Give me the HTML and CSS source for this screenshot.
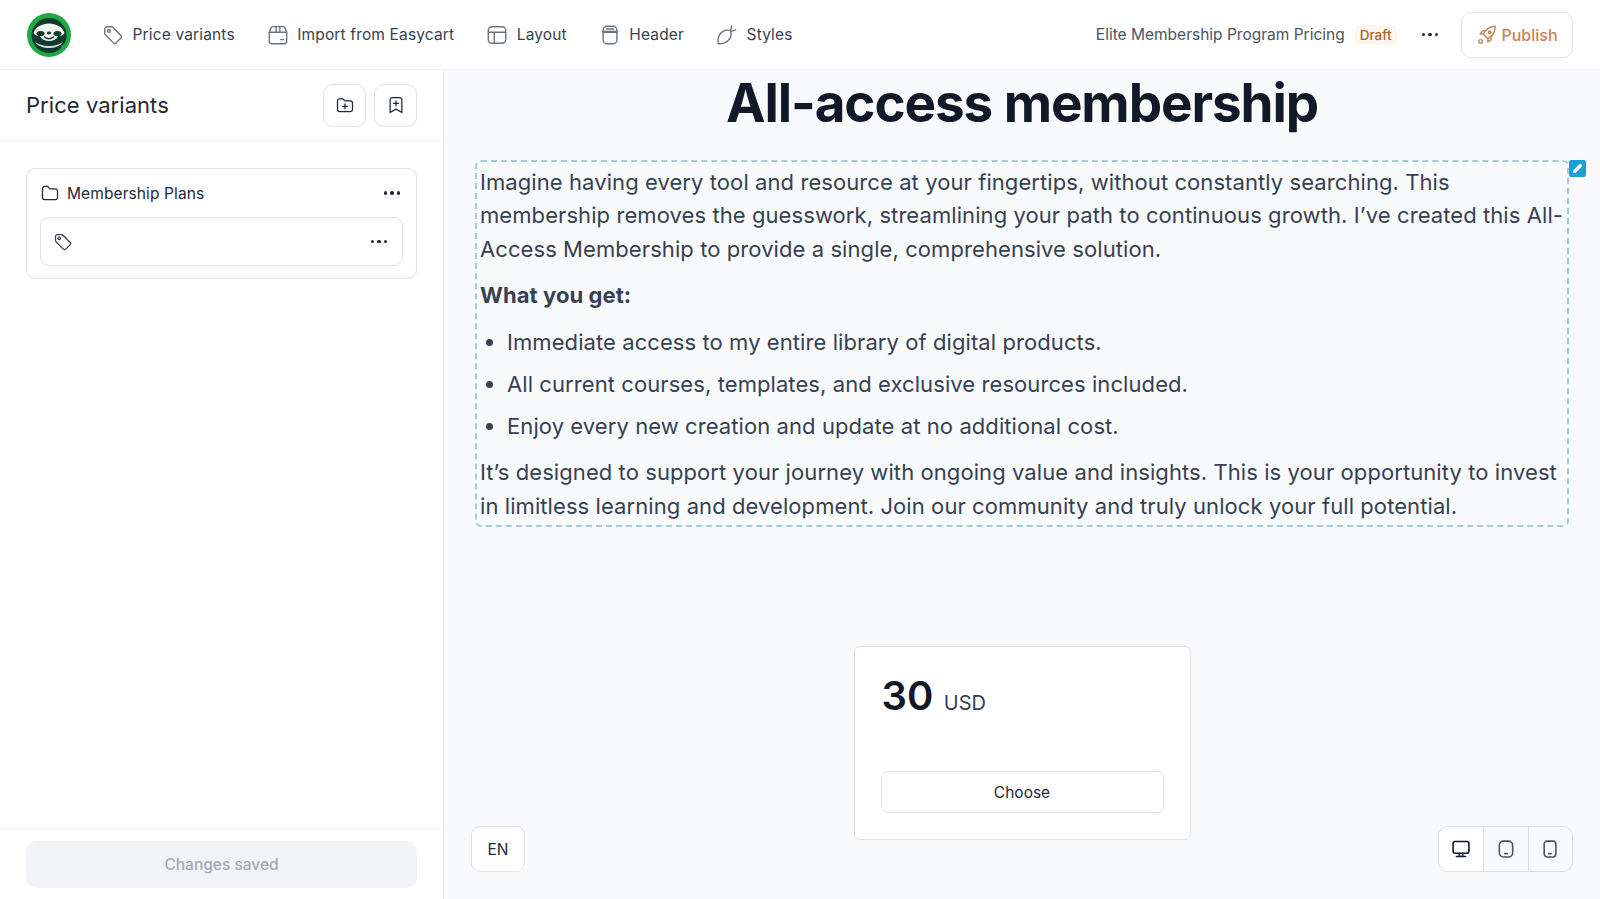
FILE: index.html
```html
<!DOCTYPE html>
<html lang="en">
<head>
    <meta charset="UTF-8">
    <meta name="viewport" content="width=device-width, initial-scale=1.0">
    <title>Elite Membership Program Pricing</title>
    <link rel="stylesheet" href="styles.css">
</head>
<body>
    <header class="topbar">
        <svg class="logo" viewBox="0 0 44 44" width="44" height="44">
            <circle cx="22" cy="22" r="22" fill="#22a745"/>
            <circle cx="22" cy="22.500" r="17.500" fill="#0e3b2e"/>
            <path d="M34 33l5-3 1 4-4 3z" fill="#22a745"/>
            <path d="M6.500 20c2-6 8.500-9.500 15.500-9.500S35.500 14 37.500 20c-1 2-3 3-5.500 3l-4-4h-12l-4 4c-2.500 0-4.500-1-5.500-3z" fill="#f4f6f2"/>
            <path d="M16 18c3-1.500 9-1.500 12 0l3 5.500c-2 3-5.500 4.500-9 4.500s-7-1.500-9-4.500z" fill="#f4f6f2"/>
            <path d="M8 29c3 4 8 6 14 6s11-2 14-6c-3 2-8 4-14 4S11 31 8 29z" fill="#f4f6f2" opacity=".85"/>
            <ellipse cx="13.500" cy="20.500" rx="4" ry="2.600" fill="#0e3b2e"/>
            <ellipse cx="30.500" cy="20.500" rx="4" ry="2.600" fill="#0e3b2e"/>
            <ellipse cx="22" cy="20" rx="2.200" ry="1.400" fill="#0e3b2e"/>
            <path d="M17.500 24c2.500 2.200 6.500 2.200 9 0" fill="none" stroke="#0e3b2e" stroke-width="1.500" stroke-linecap="round"/>
        </svg>
        <nav class="nav">
            <a class="nav-item">
                <svg class="icon" viewBox="0 0 24 24" width="22" height="22"><path d="M3 5.500V10c0 .8.300 1.500.900 2l8.600 8.600c.800.800 2 .800 2.800 0l5.300-5.300c.800-.800.800-2 0-2.800L12 3.900C11.500 3.300 10.800 3 10 3H5.500A2.500 2.500 0 0 0 3 5.500z"/><circle cx="7.500" cy="7.500" r="1.500"/></svg>
                Price variants
            </a>
            <a class="nav-item">
                <svg class="icon" viewBox="0 0 24 24" width="22" height="22"><path d="M2.500 19V9l2-5c.300-.700 1-1.200 1.800-1.200h11.400c.8 0 1.500.5 1.800 1.200l2 5v10a2.500 2.500 0 0 1-2.500 2.500H5A2.500 2.500 0 0 1 2.500 19z"/><path d="M2.500 9h19M10 3v6M14 3v6M15 17h3"/></svg>
                Import from Easycart
            </a>
            <a class="nav-item">
                <svg class="icon" viewBox="0 0 24 24" width="22" height="22"><rect x="2.500" y="3" width="19" height="18" rx="4"/><path d="M2.500 9h19M9 9v12"/></svg>
                Layout
            </a>
            <a class="nav-item">
                <svg class="icon" viewBox="0 0 24 24" width="22" height="22"><rect x="4.500" y="2.500" width="15" height="19" rx="4"/><path d="M4.500 8.500h15" stroke-width="2.500"/><path d="M8 5.500h8"/></svg>
                Header
            </a>
            <a class="nav-item">
                <svg class="icon" viewBox="0 0 24 24" width="22" height="22"><path d="M2.500 21.500c-1-6 1-11 5-13.500 3-1.800 6-1.500 8.500-1 .8 3 .8 6-1 9-2.500 4-7 6-12.500 5.500z"/><path d="M16 6.500l1-4.500M16.500 8l5-1.500"/></svg>
                Styles
            </a>
        </nav>
        <div class="doc-info">
            <span class="doc-name">Elite Membership Program Pricing</span>
            <span class="badge">Draft</span>
            <span class="dots dots-dark"><i></i><i></i><i></i></span>
            <button class="publish">
                <svg class="icon" viewBox="0 0 24 24" width="22" height="22"><path d="M8 11c2-5 6-8 13-8.500C21 9.500 17 14 13 16l-5-5z"/><path d="M8 11H4.500L7 7.500h4M13 16v3.500l3.500-2.500v-4"/><circle cx="15" cy="9" r="1.300"/><circle cx="5" cy="19" r="2"/></svg>
                Publish
            </button>
        </div>
    </header>

    <div class="workspace">
        <aside class="sidebar">
            <div class="side-head">
                <h2>Price variants</h2>
                <div class="side-actions">
                    <button class="square-btn">
                        <svg class="icon" viewBox="0 0 24 24" width="20" height="20"><path d="M3 7a2.500 2.500 0 0 1 2.500-2.500h3.700L12 7h6.500A2.500 2.500 0 0 1 21 9.500v8a2.500 2.500 0 0 1-2.500 2.500h-13A2.500 2.500 0 0 1 3 17.500z"/><path d="M12 10.500v6M9 13.500h6"/></svg>
                    </button>
                    <button class="square-btn">
                        <svg class="icon" viewBox="0 0 24 24" width="20" height="20"><path d="M5 5.500A2.500 2.500 0 0 1 7.500 3h9A2.500 2.500 0 0 1 19 5.500V21l-7-4-7 4z"/><path d="M12 7v6M9 10h6"/></svg>
                    </button>
                </div>
            </div>
            <div class="side-body">
                <div class="group-card">
                    <div class="group-title">
                        <svg class="icon" viewBox="0 0 24 24" width="20" height="20"><path d="M3 6.500A2.500 2.500 0 0 1 5.500 4h3.700l2.800 3h6.500A2.500 2.500 0 0 1 21 9.500v8a2.500 2.500 0 0 1-2.500 2.500h-13A2.500 2.500 0 0 1 3 17.500z"/></svg>
                        <span>Membership Plans</span>
                        <span class="dots"><i></i><i></i><i></i></span>
                    </div>
                    <div class="variant-row">
                        <svg class="icon" viewBox="0 0 24 24" width="20" height="20"><path d="M3 5.500V10c0 .8.300 1.500.900 2l8.600 8.600c.800.800 2 .800 2.800 0l5.300-5.300c.800-.800.800-2 0-2.800L12 3.900C11.500 3.300 10.800 3 10 3H5.500A2.500 2.500 0 0 0 3 5.500z"/><circle cx="7.500" cy="7.500" r="1.500"/></svg>
                        <span class="dots"><i></i><i></i><i></i></span>
                    </div>
                </div>
            </div>
            <div class="side-foot">
                <button class="save-btn">Changes saved</button>
            </div>
        </aside>

        <main class="preview">
            <h1>All-access membership</h1>
            <section class="editable">
                <span class="edit-tag">
                    <svg viewBox="0 0 16 16" width="13" height="13"><path d="M3 10 10 3a2 2 0 0 1 3 3L6 13l-3.500.5z" fill="#fff"/></svg>
                </span>
                <p>Imagine having every tool and resource at your fingertips, without constantly searching. This membership removes the guesswork, streamlining your path to continuous growth. I’ve created this All-Access Membership to provide a single, comprehensive solution.</p>
                <p><strong>What you get:</strong></p>
                <ul>
                    <li>Immediate access to my entire library of digital products.</li>
                    <li>All current courses, templates, and exclusive resources included.</li>
                    <li>Enjoy every new creation and update at no additional cost.</li>
                </ul>
                <p>It’s designed to support your journey with ongoing value and insights. This is your opportunity to invest in limitless learning and development. Join our community and truly unlock your full potential.</p>
            </section>
            <div class="price-card">
                <div class="price"><b>30</b> <span>USD</span></div>
                <button class="choose">Choose</button>
            </div>
            <button class="lang">EN</button>
            <div class="devices">
                <button class="device active">
                    <svg class="icon" viewBox="0 0 24 24" width="20" height="20"><rect x="2.500" y="3" width="19" height="14" rx="2.500"/><path d="M10 17v4M14 17v4M6.500 21h11"/></svg>
                </button>
                <button class="device">
                    <svg class="icon" viewBox="0 0 24 24" width="20" height="20"><rect x="4" y="2.500" width="16" height="19" rx="5"/><path d="M10.500 17.500h3"/></svg>
                </button>
                <button class="device">
                    <svg class="icon" viewBox="0 0 24 24" width="20" height="20"><rect x="5" y="2.500" width="14" height="19" rx="3.500"/><path d="M10.500 17.500h3"/></svg>
                </button>
            </div>
        </main>
    </div>
</body>
</html>
```

FILE: styles.css
```css
* {
    box-sizing: border-box;
}
html, body {
    height: 100%;
}
body {
    margin: 0;
    font-family: Inter, 'Noto Sans', sans-serif;
    color: #111827;
    background: #fff;
    overflow: hidden;
}
button {
    font-family: inherit;
    cursor: pointer;
}
.icon {
    fill: none;
    stroke: currentColor;
    stroke-width: 1.5;
    stroke-linecap: round;
    stroke-linejoin: round;
    flex-shrink: 0;
}
.topbar {
    height: 70px;
    display: flex;
    align-items: center;
    padding: 0 27px;
    border-bottom: 1px solid #eef0f3;
}
.logo {
    flex-shrink: 0;
    margin-right: 31px;
}
.nav {
    display: flex;
    align-items: center;
    gap: 32px;
}
.nav-item {
    display: flex;
    align-items: center;
    gap: 8.500px;
    font-size: 15.500px;
    letter-spacing: .15px;
    color: #374151;
}
.nav-item .icon {
    color: #6b7280;
}
.doc-info {
    margin-left: auto;
    display: flex;
    align-items: center;
}
.doc-name {
    font-size: 15.500px;
    color: #4b5563;
}
.badge {
    margin-left: 10px;
    padding: 2px 5px;
    font-size: 13.500px;
    font-weight: 500;
    color: #a8652b;
    background: #fdf7f0;
    border-radius: 4px;
}
.dots {
    display: inline-flex;
    gap: 3px;
    align-items: center;
}
.dots i {
    width: 3.500px;
    height: 3.500px;
    border-radius: 50%;
    background: #1f2937;
}
.dots-dark {
    margin: 0 23px 0 25px;
}
.publish {
    width: 112px;
    height: 46px;
    display: flex;
    align-items: center;
    justify-content: center;
    gap: 3px;
    font-size: 16px;
    font-weight: 500;
    color: #c98450;
    background: #fff;
    border: 1px solid #e2e4e8;
    border-radius: 10px;
}
.workspace {
    height: calc(100% - 70px);
    display: flex;
}
.sidebar {
    width: 444px;
    flex-shrink: 0;
    display: flex;
    flex-direction: column;
    border-right: 1px solid #eef0f3;
    background: #fff;
}
.side-head {
    height: 71px;
    display: flex;
    align-items: center;
    justify-content: space-between;
    padding: 0 26px;
    border-bottom: 1px solid #eef0f3;
}
.side-head h2 {
    margin: 0;
    font-size: 22px;
    font-weight: 400;
    letter-spacing: .05px;
    color: #1f2937;
}
.side-actions {
    display: flex;
    gap: 8px;
}
.square-btn {
    width: 43px;
    height: 43px;
    display: flex;
    align-items: center;
    justify-content: center;
    color: #1f2937;
    background: #fff;
    border: 1px solid #dfe1e6;
    border-radius: 10px;
}
.side-body {
    flex: 1;
    padding: 27px 26px 0;
}
.group-card {
    height: 111px;
    padding: 0 13px;
    border: 1px solid #dfe1e6;
    border-radius: 9px;
}
.group-title {
    height: 48px;
    display: flex;
    align-items: center;
    gap: 7px;
    padding-right: 3px;
    font-size: 15.500px;
    letter-spacing: .1px;
    color: #1f2937;
}
.group-title .dots {
    margin-left: auto;
}
.variant-row {
    height: 49px;
    display: flex;
    align-items: center;
    justify-content: space-between;
    padding: 0 15px 0 12px;
    color: #374151;
    border: 1px solid #dfe1e6;
    border-radius: 9px;
}
.side-foot {
    height: 71px;
    padding: 12px 26px;
    border-top: 1px solid #eef0f3;
}
.save-btn {
    width: 100%;
    height: 47px;
    font-size: 15.500px;
    font-weight: 500;
    color: #a3a9b5;
    background: #f1f3f6;
    border: none;
    border-radius: 10px;
}
.preview {
    flex: 1;
    position: relative;
    background: #f9fafb;
    padding: 0 31px;
    display: flex;
    flex-direction: column;
}
.preview h1 {
    margin: 0;
    height: 90px;
    line-height: 66px;
    text-align: center;
    font-size: 53px;
    font-weight: 700;
    letter-spacing: -1.100px;
    color: #111827;
}
.editable {
    position: relative;
    height: 367px;
    padding: 4px 0 0 3px;
    border: 2px dashed #a5cdd3;
    border-radius: 6px;
    font-size: 22px;
    letter-spacing: .08px;
    line-height: 33.400px;
    color: #374151;
}
.editable p {
    margin: 0 0 13px;
}
.editable ul {
    margin: 13px 0;
    padding-left: 27px;
}
.editable li {
    margin-bottom: 8.800px;
}
.edit-tag {
    position: absolute;
    top: -2px;
    right: -19px;
    width: 17px;
    height: 17px;
    display: flex;
    align-items: center;
    justify-content: center;
    background: #1d9fd8;
    border-radius: 2px;
}
.price-card {
    align-self: center;
    width: 337px;
    height: 194px;
    margin-top: 119px;
    padding: 24px 26px 26px 27px;
    display: flex;
    flex-direction: column;
    justify-content: space-between;
    background: #fff;
    border: 1px solid #dfe1e6;
    border-radius: 6px;
}
.price b {
    font-size: 40px;
    font-weight: 600;
    color: #111827;
}
.price span {
    margin-left: 6px;
    font-size: 20px;
    color: #374151;
}
.choose {
    width: 283px;
    height: 42px;
    margin-left: -1px;
    font-size: 15.500px;
    font-weight: 400;
    color: #1f2937;
    background: #fff;
    border: 1px solid #dfe1e6;
    border-radius: 7px;
}
.lang {
    position: absolute;
    left: 27px;
    bottom: 27px;
    width: 54px;
    height: 46px;
    font-size: 15.500px;
    color: #1f2937;
    background: #fff;
    border: 1px solid #dfe1e6;
    border-radius: 9px;
}
.devices {
    position: absolute;
    right: 27px;
    bottom: 27px;
    display: flex;
    border: 1px solid #dcdfe4;
    border-radius: 10px;
    overflow: hidden;
}
.device {
    width: 44.330px;
    height: 44px;
    display: flex;
    align-items: center;
    justify-content: center;
    color: #4b5563;
    background: #f9fafb;
    border: none;
    border-left: 1px solid #dcdfe4;
}
.device .icon {
    stroke-width: 1.900;
}
.device.active {
    color: #111827;
    background: #fff;
    border-left: none;
}
```
